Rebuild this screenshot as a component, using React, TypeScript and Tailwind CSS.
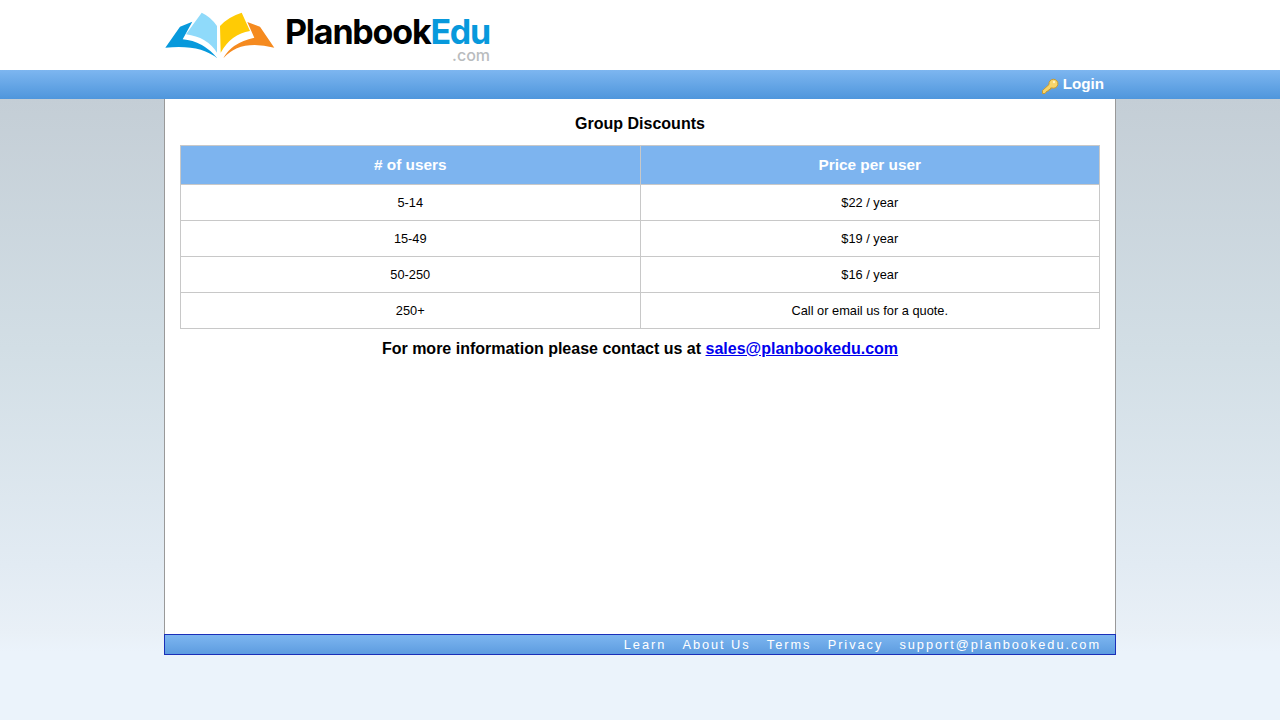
const rows = [
  ["5-14", "$22 / year"],
  ["15-49", "$19 / year"],
  ["50-250", "$16 / year"],
  ["250+", "Call or email us for a quote."],
];

const footerLinks = ["Learn", "About Us", "Terms", "Privacy", "support@planbookedu.com"];

function BookLogo() {
  return (
    <svg width="110" height="50" viewBox="0 0 110 50" className="block">
      {/* left cover */}
      <path d="M0.3 36.7 L15 15.7 L27.3 10.7 L17.7 28.3 Q38 30 52.3 47.3 Q35 33 0.3 36.7 Z" fill="#0799dc" />
      {/* left page */}
      <path d="M36.7 1.7 L21 23.3 Q42 26 52 41.7 L52 15 Q46 6 36.7 1.7 Z" fill="#8fdafa" />
      {/* right page */}
      <path d="M55 15 Q63 6 76.7 1.7 L85 20 Q66 23 55.7 41.7 Z" fill="#ffcb05" />
      {/* right cover */}
      <path d="M82.3 11 L95 15.7 L109.3 36.7 Q75 28 58.3 47.3 Q66 32 89.3 26.7 Z" fill="#f58a1f" />
    </svg>
  );
}

function KeyIcon() {
  return (
    <svg width="18" height="18" viewBox="0 0 18 18" className="block">
      <path
        d="M1.5 13.5 L8 7.5 A4.5 4.5 0 1 1 11 11 L9.5 11 L9.5 12.5 L8 12.5 L7.5 14 L6 14 L4 16.5 L1.5 16.5 Z"
        fill="#f7d56b"
        stroke="#c99a2e"
        strokeWidth="1"
      />
      <circle cx="13" cy="5" r="1.2" fill="#fff3c0" />
    </svg>
  );
}

export default function App() {
  return (
    <div className="min-h-screen bg-white font-['Liberation_Sans',Arial,sans-serif] text-black">
      <header className="h-[70px] bg-white">
        <div className="w-[952px] mx-auto flex items-start pl-px pt-[11px]">
          <BookLogo />
          <div className="ml-[10px] mt-[6px] flex flex-col items-end">
            <div className="font-['Inter',sans-serif] font-bold text-[34px] leading-[30px] tracking-[-1.2px]">
              <span className="inline-block">Planbook</span>
              <span className="inline-block text-[#0799dc]">Edu</span>
            </div>
            <div className="font-['Inter',sans-serif] font-medium text-[16px] leading-[14px] mt-[1px] text-[#b9bcbe]">.com</div>
          </div>
        </div>
      </header>

      <nav className="h-[29px] bg-[linear-gradient(#7db6f0,#4f96dc)]">
        <div className="w-[952px] mx-auto h-full flex justify-end pr-[12px]">
          <a className="flex items-start text-white font-bold text-[15.2px] leading-[17px] pt-[5px]">
            <span className="mt-[2px] mr-[4px]">
              <KeyIcon />
            </span>
            Login
          </a>
        </div>
      </nav>

      <div className="h-[621px] bg-[linear-gradient(#c4ced6_0%,#d2dee5_40%,#e2ebf3_75%,#e9f0f7_86%,#ebf3fb_89%,#ebf3fb_100%)]">
        <main className="w-[952px] mx-auto">
          <div className="h-[535px] bg-white border-x border-[#999999] px-[15px]">
            <h1 className="pt-[15px] text-center font-bold text-[16px] leading-[20px]">Group Discounts</h1>
            <table className="mt-[11px] w-[920px] table-fixed border-collapse text-[12.8px]">
              <thead>
                <tr className="h-[39px] bg-[#7db4ef] text-white text-[15.36px] font-bold">
                  <th className="border border-[#c8c8c8]"># of users</th>
                  <th className="border border-[#c8c8c8]">Price per user</th>
                </tr>
              </thead>
              <tbody>
                {rows.map(([users, price]) => (
                  <tr key={users} className="h-[36px] text-center">
                    <td className="border border-[#c8c8c8]">{users}</td>
                    <td className="border border-[#c8c8c8]">{price}</td>
                  </tr>
                ))}
              </tbody>
            </table>
            <p className="mt-[10px] text-center font-bold text-[16px] leading-[20px]">
              For more information please contact us at{" "}
              <a className="text-[#0000ee] underline">sales@planbookedu.com</a>
            </p>
          </div>
          <footer className="h-[21px] border border-[#1a2fb8] bg-[linear-gradient(#7db6f0,#5d9ce0)] flex justify-end items-center gap-[16.2px] pr-[14px] text-[12.8px] tracking-[1.95px] text-white">
            {footerLinks.map((link) => (
              <span key={link}>{link}</span>
            ))}
          </footer>
        </main>
      </div>
    </div>
  );
}
